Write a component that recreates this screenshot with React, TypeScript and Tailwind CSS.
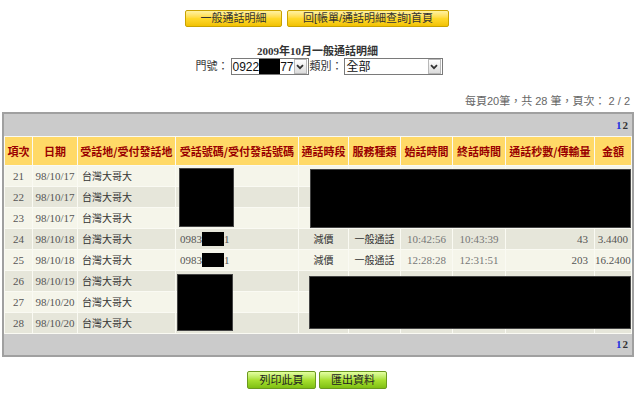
import React from "react";

const cols = [27, 44, 97, 122, 49, 51, 51, 52, 88, 36];
const headers = [
  "項次",
  "日期",
  "受話地/受付發話地",
  "受話號碼/受付發話號碼",
  "通話時段",
  "服務種類",
  "始話時間",
  "終話時間",
  "通話秒數/傳輸量",
  "金額",
];

type Row = { n: number; d: string; data?: string[] };
const rows: Row[] = [
  { n: 21, d: "98/10/17" },
  { n: 22, d: "98/10/17" },
  { n: 23, d: "98/10/17" },
  { n: 24, d: "98/10/18", data: ["減價", "一般通話", "10:42:56", "10:43:39", "43", "3.4400"] },
  { n: 25, d: "98/10/18", data: ["減價", "一般通話", "12:28:28", "12:31:51", "203", "16.2400"] },
  { n: 26, d: "98/10/19" },
  { n: 27, d: "98/10/20" },
  { n: 28, d: "98/10/20" },
];

const serif = { fontFamily: '"Liberation Serif", "Noto Sans CJK TC", serif' };
const sans = { fontFamily: '"Liberation Sans", "Noto Sans CJK TC", sans-serif' };

function YellowBtn({ w, children }: { w: string; children: React.ReactNode }) {
  return (
    <div
      className={`${w} h-[17px] flex items-center justify-center rounded-[2px] border border-[#c9a200] bg-gradient-to-b from-[#fff2a0] via-[#ffd92a] to-[#f2c200] text-[11px] leading-none text-[#333]`}
      style={sans}
    >
      {children}
    </div>
  );
}

function GreenBtn({ w, children }: { w: string; children: React.ReactNode }) {
  return (
    <div
      className={`${w} h-[18px] flex items-center justify-center rounded-[2px] border border-[#6b9a1e] bg-gradient-to-b from-[#e4ffa0] via-[#a8e030] to-[#7fc012] text-[11px] leading-none text-[#222]`}
      style={sans}
    >
      {children}
    </div>
  );
}

function Arrow() {
  return (
    <div className="w-[13px] h-[15px] flex items-center justify-center border border-[#b8b8b8] bg-gradient-to-b from-[#ffffff] to-[#dcdcdc]">
      <svg width="8" height="6" viewBox="0 0 8 6">
        <path d="M1 1.2 L4 4.2 L7 1.2" fill="none" stroke="#333" strokeWidth="1.8" />
      </svg>
    </div>
  );
}

export default function App() {
  return (
    <div className="relative w-[640px] h-[399px] bg-white overflow-hidden">
      {/* top buttons */}
      <div className="flex justify-center gap-[5px] pt-[10px] pr-[6px]">
        <YellowBtn w="w-[97px]">一般通話明細</YellowBtn>
        <YellowBtn w="w-[162px]">回[帳單/通話明細查詢]首頁</YellowBtn>
      </div>

      {/* title */}
      <div
        className="mt-[17px] h-[14px] text-center text-[11px] leading-[14px] font-bold text-[#333] pr-[5px]"
        style={serif}
      >
        2009年10月一般通話明細
      </div>

      {/* selects */}
      <div className="flex justify-center items-center h-[17px] pr-[2px]" style={sans}>
        <span className="text-[11px] text-[#333] mr-[2px]">門號：</span>
        <div className="w-[78px] h-[17px] border border-[#7a7a7a] bg-white flex items-center pl-[1px] pr-[1px]">
          <span className="text-[12px] text-[#111] leading-none">0922</span>
          <span className="inline-block w-[24px] h-[15px] bg-black" />
          <span className="text-[12px] text-[#111] leading-none">77</span>
          <div className="ml-auto">
            <Arrow />
          </div>
        </div>
        <span className="text-[11px] text-[#333] ml-[1px] mr-[1px]">類別：</span>
        <div className="w-[99px] h-[17px] border border-[#7a7a7a] bg-white flex items-center pl-[2px] pr-[1px]">
          <span className="text-[12px] text-[#111] leading-none">全部</span>
          <div className="ml-auto">
            <Arrow />
          </div>
        </div>
      </div>

      {/* stats */}
      <div
        className="mt-[19px] h-[15px] text-right pr-[10px] text-[11px] leading-[15px] text-[#666]"
        style={sans}
      >
        每頁20筆，共 28 筆，頁次： 2 / 2
      </div>

      {/* table */}
      <div className="mt-[3px] ml-[2px] w-[632px] border-2 border-[#a0a0a0] bg-[#fafaf3]">
        <div
          className="h-[22px] bg-[#cbcbcb] flex items-center justify-end pr-[4px] text-[11px] font-bold"
          style={serif}
        >
          <span className="text-[#2030e0]">1</span>
          <span className="text-[#333] ml-[1px]">2</span>
        </div>
        <table className="w-full table-fixed border-separate border-spacing-px">
          <colgroup>
            {cols.map((c, i) => (
              <col key={i} style={{ width: c }} />
            ))}
          </colgroup>
          <thead>
            <tr>
              {headers.map((h) => (
                <th
                  key={h}
                  className="h-[28px] p-0 bg-[#ffd967] text-[11px] font-bold text-[#990000] text-center whitespace-nowrap overflow-hidden"
                  style={{ fontFamily: '"Noto Sans CJK TC", sans-serif' }}
                >
                  {h}
                </th>
              ))}
            </tr>
          </thead>
          <tbody style={serif} className="text-[10px] text-[#555]">
            {rows.map((r, i) => {
              const bg = i % 2 === 0 ? "bg-[#f5f5ea]" : "bg-[#e6e6da]";
              const td = `h-[20px] p-0 ${bg} whitespace-nowrap overflow-hidden`;
              return (
                <tr key={r.n}>
                  <td className={`${td} text-center text-[11px]`}>{r.n}</td>
                  <td className={`${td} text-center text-[11px]`}>{r.d}</td>
                  <td className={`${td} pl-[4px] text-[#333]`}>台灣大哥大</td>
                  <td className={`${td} pl-[4px]`}>
                    {r.data ? (
                      <span className="flex items-center text-[11px]">
                        0983
                        <span className="inline-block w-[22px] h-[14px] bg-black" />1
                      </span>
                    ) : null}
                  </td>
                  <td className={`${td} text-center text-[#333]`}>{r.data?.[0]}</td>
                  <td className={`${td} text-center text-[#333]`}>{r.data?.[1]}</td>
                  <td className={`${td} text-center text-[11px] text-[#777]`}>{r.data?.[2]}</td>
                  <td className={`${td} text-center text-[11px] text-[#777]`}>{r.data?.[3]}</td>
                  <td className={`${td} text-right pr-[6px] text-[11px]`}>{r.data?.[4]}</td>
                  <td className={`${td} text-right pr-[3px] text-[11px]`}>{r.data?.[5]}</td>
                </tr>
              );
            })}
          </tbody>
        </table>
        <div
          className="h-[21px] bg-[#cbcbcb] flex items-center justify-end pr-[4px] text-[11px] font-bold"
          style={serif}
        >
          <span className="text-[#2030e0]">1</span>
          <span className="text-[#333] ml-[1px]">2</span>
        </div>
      </div>

      {/* bottom buttons */}
      <div className="flex justify-center gap-[3px] mt-[14px] pr-[6px]">
        <GreenBtn w="w-[69px]">列印此頁</GreenBtn>
        <GreenBtn w="w-[68px]">匯出資料</GreenBtn>
      </div>

      {/* redaction overlays */}
      <div className="absolute left-[179px] top-[168px] w-[55px] h-[59px] bg-black border border-[#444]" />
      <div className="absolute left-[310px] top-[169px] w-[321px] h-[59px] bg-black border border-[#444]" />
      <div className="absolute left-[177px] top-[274px] w-[56px] h-[57px] bg-black border border-[#444]" />
      <div className="absolute left-[309px] top-[276px] w-[322px] h-[53px] bg-black border border-[#444]" />
    </div>
  );
}
